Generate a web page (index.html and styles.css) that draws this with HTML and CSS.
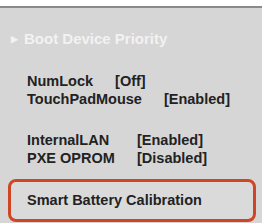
FILE: index.html
```html
<!DOCTYPE html>
<html lang="en">
<head>
    <meta charset="UTF-8">
    <title>BIOS Settings</title>
    <link rel="stylesheet" href="styles.css">
</head>
<body>
    <div class="topbar"></div>
    <div class="panel">
        <div class="boot"><span class="arrow">&#9654;</span>Boot Device Priority</div>
        <div class="group">
            <div class="row"><span>NumLock</span><span>[Off]</span></div>
            <div class="row"><span>TouchPadMouse</span><span>[Enabled]</span></div>
        </div>
        <div class="group lan">
            <div class="row"><span>InternalLAN</span><span>[Enabled]</span></div>
            <div class="row"><span>PXE OPROM</span><span>[Disabled]</span></div>
        </div>
        <div class="battery">Smart Battery Calibration</div>
    </div>
</body>
</html>
```
FILE: styles.css
```css
html,
body {
    margin: 0;
    padding: 0;
    width: 262px;
    height: 223px;
    overflow: hidden;
}

body {
    background-color: #fff;
    font-family: "Liberation Sans", Arial, sans-serif;
    font-weight: 700;
    color: #222;
}

.topbar {
    height: 6px;
    background-color: #fff;
    border-bottom: 2px solid #8a8a8a;
}

.panel {
    height: 215px;
    background-color: #d6d6d6;
    padding: 22px 6px 0 8px;
    box-sizing: border-box;
}

.boot {
    color: #f2f2f2;
    font-size: 15px;
    line-height: 18px;
    padding-left: 3px;
}

.arrow {
    font-size: 9px;
    margin-right: 6px;
    vertical-align: 2px;
}

.group {
    padding-left: 19px;
    margin-top: 24px;
}

.group + .group {
    margin-top: 23px;
}

.row {
    display: flex;
    gap: 22px;
    font-size: 14.5px;
    line-height: 18px;
}

/* values in the LAN block line up */
.lan .row {
    gap: 0;
}

.lan .row span:first-child {
    width: 110px;
}

.battery {
    margin-top: 12px;
    border: 3px solid #cf4526;
    border-radius: 8px;
    padding: 9px 16px 10px;
    font-size: 14.5px;
    line-height: 18px;
    background-color: #dadada;
}
```
